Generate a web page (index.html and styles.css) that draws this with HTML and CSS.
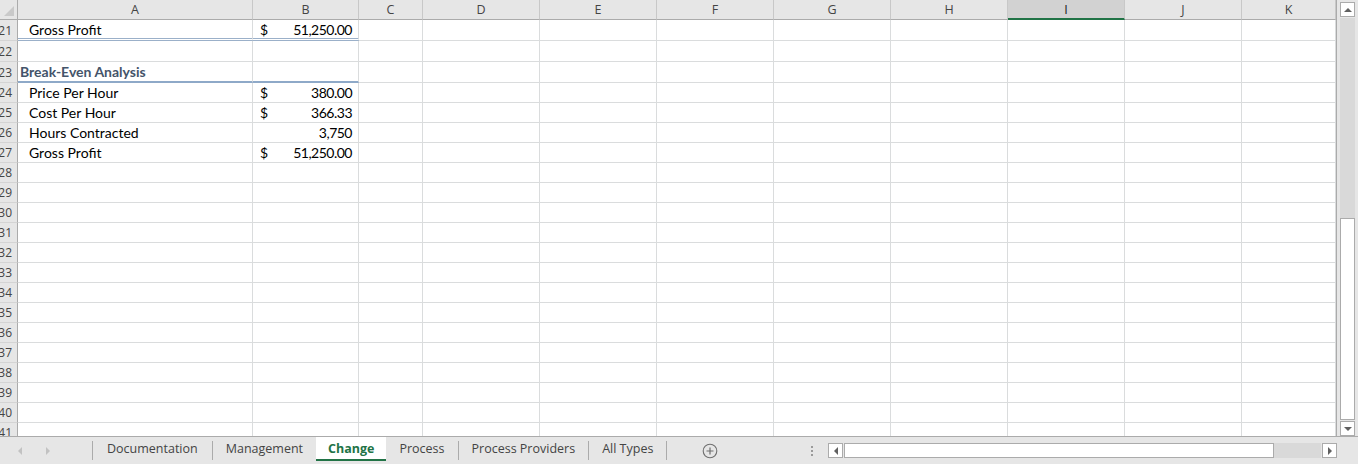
FILE: index.html
```html
<!DOCTYPE html>
<html>
<head>
    <title>Change - Workbook</title>
    <meta name="viewport" content="width=device-width, initial-scale=1">
    <link rel="stylesheet" href="styles.css">
</head>
<body>
    <div class="workbook">
        <div class="sheet" id="sheet"></div>

        <div class="vscroll">
            <div class="sb-btn"><span class="tri tri-up"></span></div>
            <div class="vtrack">
                <div class="vthumb"></div>
            </div>
            <div class="sb-btn"><span class="tri tri-down"></span></div>
        </div>
    </div>

    <div class="tabbar">
        <div class="tab-nav">
            <span class="tri tri-left nav-arrow"></span>
            <span class="tri tri-right nav-arrow"></span>
        </div>
        <span class="sep"></span>
        <div class="tab first">Documentation</div>
        <span class="sep"></span>
        <div class="tab">Management</div>
        <div class="tab active">Change</div>
        <div class="tab">Process</div>
        <span class="sep"></span>
        <div class="tab">Process Providers</div>
        <span class="sep"></span>
        <div class="tab">All Types</div>
        <span class="sep"></span>

        <svg class="add-sheet" width="16" height="16" viewBox="0 0 16 16">
            <circle cx="8" cy="8" r="6.8" fill="none" stroke="#6f6f6f" stroke-width="1.1"/>
            <path d="M8 4.5v7M4.5 8h7" stroke="#6f6f6f" stroke-width="1.2"/>
        </svg>

        <div class="grip"><i></i><i></i><i></i></div>

        <div class="hscroll">
            <div class="sb-btn"><span class="tri tri-left"></span></div>
            <div class="htrack">
                <div class="hthumb"></div>
            </div>
            <div class="sb-btn"><span class="tri tri-right"></span></div>
        </div>
        <div class="corner-fill"></div>
    </div>

    <script>
        const columns = ['A', 'B', 'C', 'D', 'E', 'F', 'G', 'H', 'I', 'J', 'K'];
        const activeColumn = 'I';

        const data = {
            21: { label: 'Gross Profit', cur: '$', value: '51,250.00', style: 'total' },
            23: { label: 'Break-Even Analysis', style: 'heading' },
            24: { label: 'Price Per Hour', cur: '$', value: '380.00' },
            25: { label: 'Cost Per Hour', cur: '$', value: '366.33' },
            26: { label: 'Hours Contracted', value: '3,750' },
            27: { label: 'Gross Profit', cur: '$', value: '51,250.00' }
        };

        const sheet = document.getElementById('sheet');

        // column headers
        let html = '<div class="row head"><div class="cell corner"></div>';
        columns.forEach(col => {
            const cls = col === activeColumn ? 'cell col-head active' : 'cell col-head';
            html += `<div class="${cls}">${col}</div>`;
        });
        html += '</div>';

        for (let n = 21; n <= 41; n++) {
            const row = data[n] || {};
            const tall = n <= 23 ? ' tall' : '';
            const style = row.style ? ' ' + row.style : '';

            html += `<div class="row${tall}">`;
            html += `<div class="cell row-head">${n}</div>`;
            html += `<div class="cell label${style}">${row.label || ''}</div>`;
            html += `<div class="cell amount${style}">
                        <span>${row.cur || ''}</span><span class="num">${row.value || ''}</span>
                     </div>`;
            for (let i = 2; i < columns.length; i++) {
                html += '<div class="cell"></div>';
            }
            html += '</div>';
        }

        sheet.innerHTML = html;
    </script>
</body>
</html>
```

FILE: styles.css
```css
* {
    margin: 0;
    padding: 0;
    box-sizing: border-box;
}

body {
    font-family: 'Open Sans', 'Noto Sans', Arial, sans-serif;
    background: #fff;
    width: 1358px;
    height: 464px;
    overflow: hidden;
}

.workbook {
    display: flex;
    height: 436px;
}

/* ---- grid ---- */

.sheet {
    width: 1337px;
    overflow: hidden;
    border-right: 1px solid #ababab;
}

.row {
    display: grid;
    grid-template-columns: 18px 235px 106px 64px repeat(7, 117px) 1fr;
    height: 20px;
}

.row.tall {
    height: 21px;
}

.cell {
    display: flex;
    align-items: center;
    border-right: 1px solid #dadcdd;
    border-bottom: 1px solid #dadcdd;
    font-family: 'Lato', 'Liberation Sans', sans-serif;
    font-size: 14px;
    color: #000;
    white-space: nowrap;
    overflow: hidden;
}

.head {
    height: 20px;
}

.corner,
.col-head,
.row-head {
    background: #e6e6e6;
    font-family: 'Open Sans', 'Noto Sans', sans-serif;
    font-size: 12.5px;
    color: #444;
}

.corner {
    position: relative;
    border-right: 1px solid #ababab;
    border-bottom: 1px solid #ababab;
}

.corner::after {
    content: '';
    position: absolute;
    right: 3px;
    bottom: 3px;
    border-left: 10px solid transparent;
    border-bottom: 10px solid #c9c9c9;
}

.col-head {
    justify-content: center;
    border-right-color: #c8c8c8;
    border-bottom-color: #ababab;
}

.col-head.active {
    background: #d2d2d2;
    color: #222;
    border-bottom: 2px solid #217346;
}

.row-head {
    justify-content: flex-end;
    padding-right: 5px;
    font-size: 12px;
    border-right-color: #ababab;
    border-bottom-color: #d4d4d4;
}

.label {
    padding-left: 11px;
}

.amount {
    justify-content: space-between;
    padding: 0 6px 0 7px;
}

.num {
    letter-spacing: -0.5px;
}

.total {
    border-bottom: 3px double #9bb0c9;
}

.heading {
    border-bottom: 2px solid #8ea9c8;
}

.label.heading {
    padding-left: 2px;
    font-weight: bold;
    color: #44546a;
}

/* ---- scroll bars ---- */

.vscroll {
    width: 21px;
    background: #e6e6e6;
    display: flex;
    flex-direction: column;
    padding: 2px 3px 0 3px;
}

.sb-btn {
    width: 15px;
    height: 15px;
    flex-shrink: 0;
    background: #fff;
    border: 1px solid #ababab;
    display: flex;
    align-items: center;
    justify-content: center;
}

.vtrack {
    flex: 1;
    margin: 1px 0;
    background: #d9d9d9;
    display: flex;
    flex-direction: column;
    justify-content: flex-end;
}

.vthumb {
    height: 202px;
    background: #fff;
    border: 1px solid #ababab;
}

.tri {
    width: 0;
    height: 0;
    display: block;
}

.tri-up {
    border-left: 4px solid transparent;
    border-right: 4px solid transparent;
    border-bottom: 4px solid #606060;
}

.tri-down {
    border-left: 4px solid transparent;
    border-right: 4px solid transparent;
    border-top: 4px solid #606060;
}

.tri-left {
    border-top: 4px solid transparent;
    border-bottom: 4px solid transparent;
    border-right: 4px solid #606060;
}

.tri-right {
    border-top: 4px solid transparent;
    border-bottom: 4px solid transparent;
    border-left: 4px solid #606060;
}

/* ---- sheet tabs ---- */

.tabbar {
    display: flex;
    align-items: center;
    height: 28px;
    background: #e6e6e6;
    border-top: 1px solid #ababab;
    font-size: 12.5px;
    color: #444;
}

.tab-nav {
    width: 92px;
    display: flex;
    align-items: center;
    gap: 24px;
    padding-left: 18px;
}

.tab-nav .nav-arrow.tri-left {
    border-right-color: #c2c2c2;
}

.tab-nav .nav-arrow.tri-right {
    border-left-color: #c2c2c2;
}

.sep {
    width: 1px;
    height: 19px;
    background: #ababab;
}

.tab {
    padding: 0 13px;
    line-height: 24px;
    align-self: flex-start;
    height: 24px;
}

.tab.first {
    padding: 0 14px;
}

.tab.active {
    background: #fff;
    color: #217346;
    font-weight: bold;
    border-bottom: 2px solid #217346;
    padding: 0 12px;
}

.add-sheet {
    margin-left: 35px;
}

.grip {
    display: flex;
    flex-direction: column;
    gap: 2px;
    margin-left: auto;
    margin-right: 15px;
}

.grip i {
    width: 2px;
    height: 2px;
    background: #9a9a9a;
}

.hscroll {
    display: flex;
    width: 509px;
    height: 15px;
}

.htrack {
    flex: 1;
    margin: 0 1px;
    background: #d9d9d9;
    display: flex;
}

.hthumb {
    width: 430px;
    background: #fff;
    border: 1px solid #ababab;
}

.corner-fill {
    width: 21px;
}
```
